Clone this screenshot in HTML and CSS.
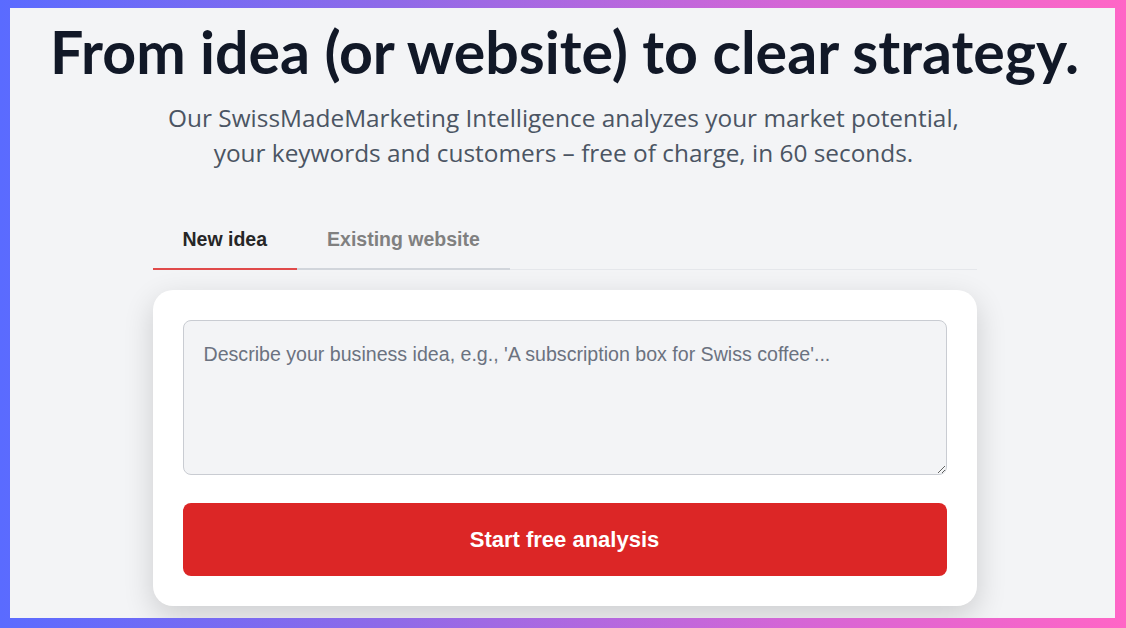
FILE: index.html
```html
<!DOCTYPE html>
<html lang="en">
<head>
<meta charset="utf-8">
<title>SwissMadeMarketing Intelligence</title>
<link rel="stylesheet" href="styles.css">
</head>
<body>
<div class="frame">
  <main class="inner">
    <h1 class="title">From idea (or website) to clear strategy.</h1>
    <p class="lead">Our SwissMadeMarketing Intelligence analyzes your market potential,<br>your keywords and customers – free of charge, in 60 seconds.</p>
    <section class="panel">
      <div class="tabs">
        <button class="tab tab-active" type="button">New idea</button>
        <button class="tab" type="button">Existing website</button>
      </div>
      <form class="card">
        <textarea class="idea" placeholder="Describe your business idea, e.g., 'A subscription box for Swiss coffee'..."></textarea>
        <button class="cta" type="button">Start free analysis</button>
      </form>
    </section>
  </main>
</div>
</body>
</html>
```
FILE: styles.css
```css
* { box-sizing: border-box; }
html, body { margin: 0; height: 100%; }
body {
  background: linear-gradient(90deg, #5a6bff 0%, #8f6ae8 35%, #d466d6 70%, #ff66c6 100%);
  overflow: hidden;
}
.frame {
  height: 628px;
  padding: 8px 11px 10px 10px;
}
.inner {
  height: 100%;
  background: #f3f4f6;
  overflow: hidden;
  display: flex;
  flex-direction: column;
  align-items: center;
  text-align: center;
  padding-left: 2px;
}
.title {
  margin: 8px 0 0 2px;
  font-family: Lato, "Liberation Sans", sans-serif;
  font-weight: 700;
  font-size: 59.1px;
  line-height: 72px;
  color: #111827;
  letter-spacing: 0;
  white-space: nowrap;
}
.lead {
  margin: 12px 0 0;
  font-family: "Open Sans", "Liberation Sans", sans-serif;
  font-size: 24.4px;
  line-height: 35px;
  color: #4b5563;
  white-space: nowrap;
}
.panel {
  width: 824px;
  margin: 48px 0 0 2px;
}
.tabs {
  display: flex;
  border-bottom: 1px solid #e5e7eb;
}
.tab {
  font-family: "Liberation Sans", Arial, sans-serif;
  font-weight: 700;
  font-size: 19.5px;
  line-height: 22px;
  padding: 10px 30px 18px;
  background: none;
  border: 0;
  border-bottom: 2px solid #d1d5db;
  margin-bottom: -1px;
  color: #808080;
  cursor: pointer;
}
.tab-active {
  color: #262626;
  border-bottom-color: #e04a4a;
}
.card {
  margin-top: 20px;
  background: #ffffff;
  border-radius: 20px;
  padding: 30px;
  box-shadow: 0 10px 30px rgba(0, 0, 0, 0.16);
  display: flex;
  flex-direction: column;
  gap: 28px;
}
.idea {
  display: block;
  width: 100%;
  height: 155px;
  padding: 21px 20px 20px;
  background: #f3f4f6;
  border: 1px solid #c9ccd2;
  border-radius: 8px;
  font-family: "Liberation Sans", Arial, sans-serif;
  font-size: 19.6px;
  line-height: 24px;
  color: #374151;
  resize: vertical;
}
.idea::placeholder { color: #6b7280; }
.cta {
  display: block;
  width: 100%;
  height: 73px;
  border: 0;
  border-radius: 8px;
  background: #dc2626;
  color: #ffffff;
  font-family: "Liberation Sans", Arial, sans-serif;
  font-weight: 700;
  font-size: 22px;
  cursor: pointer;
}
```
